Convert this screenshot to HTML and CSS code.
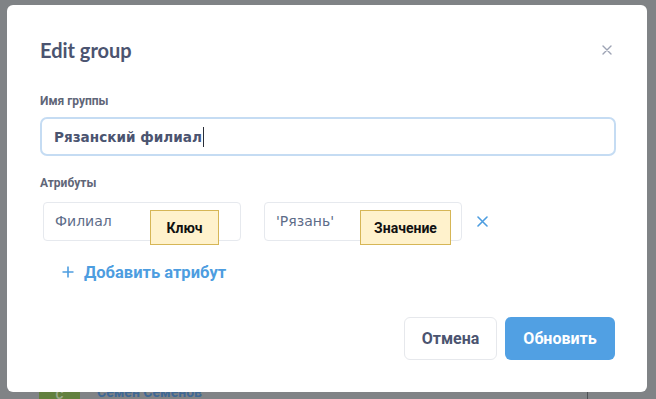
FILE: index.html
```html
<!DOCTYPE html>
<html lang="ru">
	<head>
		<meta charset="UTF-8" />
		<meta name="viewport" content="width=device-width, initial-scale=1.0" />
		<title>Edit group</title>
		<link rel="stylesheet" href="styles.css">
	</head>
	<body>
		<div class="page">
			<div class="member-row">
				<div class="avatar">С</div>
				<div class="member-name">Семен Семенов</div>
				<div class="divider"></div>
			</div>
		</div>

		<div class="modal">
			<div class="modal-header">
				<h2 class="modal-title">Edit group</h2>
				<button class="close-btn" aria-label="Close">
					<svg width="10" height="10" viewBox="0 0 10 10">
						<path d="M1 1L9 9M9 1L1 9" stroke="#9da3b4" stroke-width="1.4" stroke-linecap="round" />
					</svg>
				</button>
			</div>

			<label class="field-label">Имя группы</label>
			<div class="name-input">
				<span class="name-value">Рязанский филиал</span><span class="caret"></span>
			</div>

			<label class="field-label attrs-label">Атрибуты</label>
			<div class="attr-row">
				<div class="attr-input">
					<span class="attr-value">Филиал</span>
					<div class="note note-key">Ключ</div>
				</div>
				<div class="attr-input">
					<span class="attr-value">'Рязань'</span>
					<div class="note note-value">Значение</div>
				</div>
				<button class="remove-btn" aria-label="Remove">
					<svg width="11" height="11" viewBox="0 0 11 11">
						<path d="M1 1L10 10M10 1L1 10" stroke="#4d9de0" stroke-width="1.6" stroke-linecap="round" />
					</svg>
				</button>
			</div>

			<a class="add-link" href="#">
				<svg width="12" height="12" viewBox="0 0 12 12">
					<path d="M6 0.5V11.5M0.5 6H11.5" stroke="#4d9de0" stroke-width="1.6" />
				</svg>
				Добавить атрибут
			</a>

			<div class="modal-footer">
				<button class="btn btn-cancel">Отмена</button>
				<button class="btn btn-primary">Обновить</button>
			</div>
		</div>
	</body>
</html>
```

FILE: styles.css
```css
html,
body {
	margin: 0;
	height: 399px;
	overflow: hidden;
}
body {
	background-color: #808386;
	font-family: Roboto, "Liberation Sans", sans-serif;
}
.page {
	padding-top: 386px;
}
.member-row {
	display: flex;
	align-items: flex-start;
	padding-left: 39px;
}
.avatar {
	width: 41px;
	height: 13px;
	background-color: #62803f;
	color: #9aa88a;
	font-size: 12px;
	font-weight: 700;
	text-align: center;
	line-height: 13px;
	margin-top: 3px;
}
.member-name {
	margin-left: 17px;
	color: #3f6895;
	font-size: 14px;
	font-weight: 700;
	line-height: 13px;
}
.divider {
	margin-left: auto;
	margin-right: 68px;
	width: 1px;
	height: 10px;
	background-color: #4e5154;
	margin-top: 3px;
}
.modal {
	position: absolute;
	left: 7px;
	top: 5px;
	width: 576px;
	height: 323px;
	padding: 32px 31px 32px 33px;
	background-color: #fff;
	border-radius: 6px;
	display: flex;
	flex-direction: column;
}
.modal-header {
	display: flex;
	justify-content: space-between;
	align-items: center;
	height: 26px;
}
.modal-title {
	margin: 0;
	font-family: Lato, "Open Sans", sans-serif;
	font-weight: 700;
	font-size: 20px;
	line-height: 26px;
	color: #4b5470;
}
.close-btn {
	background: none;
	border: none;
	padding: 0;
	margin-right: 4px;
	width: 10px;
	height: 10px;
	display: flex;
	cursor: pointer;
}
.field-label {
	display: block;
	margin-top: 30px;
	font-size: 12px;
	font-weight: 700;
	line-height: 16px;
	color: #5f6678;
}
.name-input {
	margin-top: 8px;
	height: 35px;
	border: 2px solid #c5dcf3;
	border-radius: 7px;
	display: flex;
	align-items: center;
	padding-left: 12px;
}
.name-value {
	font-family: "DejaVu Sans", sans-serif;
	font-weight: 700;
	font-size: 13.6px;
	color: #4b5470;
}
.caret {
	display: inline-block;
	width: 1px;
	height: 20px;
	background-color: #2a2e38;
	margin-left: 1px;
}
.attrs-label {
	margin-top: 19px;
}
.attr-row {
	display: flex;
	align-items: center;
	gap: 23px;
	margin-top: 11px;
	padding-left: 3px;
}
.attr-input {
	position: relative;
	width: 185px;
	height: 37px;
	border: 1px solid #e6e9ee;
	border-radius: 4px;
	display: flex;
	align-items: center;
	padding-left: 11px;
}
.attr-value {
	font-family: "DejaVu Sans", sans-serif;
	font-size: 14px;
	color: #5d6c88;
	margin-top: -2px;
}
.note {
	position: absolute;
	top: 7px;
	height: 33px;
	background-color: #fff2cc;
	border: 1px solid #d6b656;
	font-size: 14px;
	font-weight: 700;
	color: #111;
	display: flex;
	align-items: center;
	justify-content: center;
}
.note-key {
	left: 106px;
	width: 67px;
}
.note-value {
	left: 95px;
	width: 89px;
}
.remove-btn {
	background: none;
	border: none;
	padding: 0;
	margin-left: -8px;
	width: 11px;
	height: 11px;
	display: flex;
	cursor: pointer;
}
.add-link {
	display: flex;
	align-items: center;
	gap: 10px;
	margin-top: 21px;
	padding-left: 22px;
	height: 20px;
	font-size: 16.5px;
	font-weight: 700;
	color: #4d9de0;
	text-decoration: none;
}
.modal-footer {
	display: flex;
	justify-content: flex-end;
	gap: 8px;
	margin-top: 35px;
}
.btn {
	height: 43px;
	border-radius: 6px;
	font-family: Roboto, "Liberation Sans", sans-serif;
	font-size: 16px;
	font-weight: 700;
	cursor: pointer;
}
.btn-cancel {
	width: 93px;
	background-color: #fff;
	border: 1px solid #e6e8ec;
	color: #4b5470;
}
.btn-primary {
	width: 110px;
	background-color: #51a0e3;
	border: none;
	color: #fff;
	margin-right: 1px;
}
```
